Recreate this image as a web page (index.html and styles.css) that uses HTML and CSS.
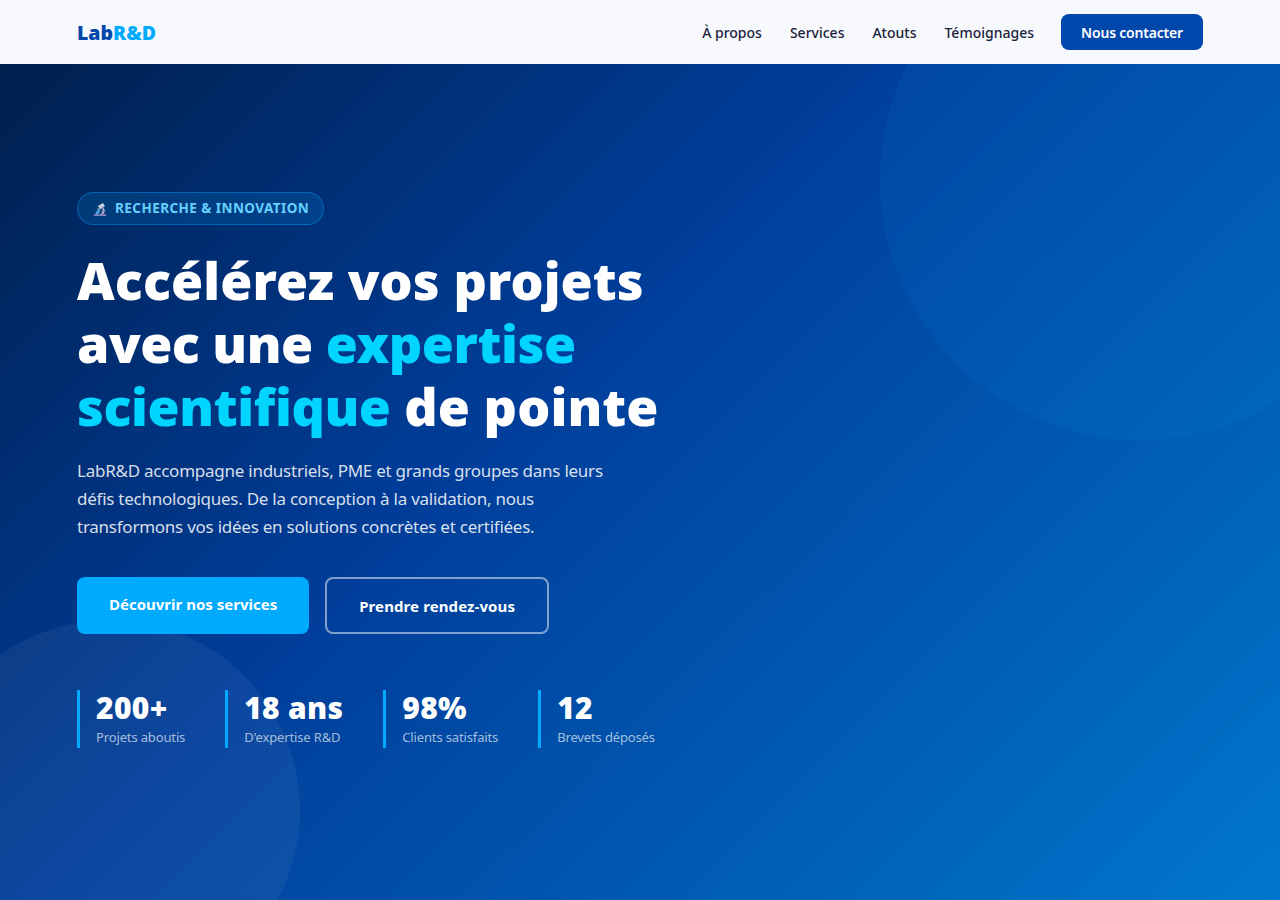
FILE: index.html
```html
<!DOCTYPE html>
<html lang="fr">
<head>
<meta charset="utf-8">
<title>LabR&amp;D</title>
<link rel="stylesheet" href="styles.css">
</head>
<body>
<nav class="navbar">
  <a class="logo" href="#">Lab<span class="logo-accent">R&amp;D</span></a>
  <div class="nav-links">
    <a class="nav-link" href="#">À propos</a>
    <a class="nav-link" href="#">Services</a>
    <a class="nav-link" href="#">Atouts</a>
    <a class="nav-link" href="#">Témoignages</a>
    <a class="nav-cta" href="#">Nous contacter</a>
  </div>
</nav>
<section class="hero">
  <div class="circle circle-top"></div>
  <div class="circle circle-bottom"></div>
  <div class="hero-content">
    <div class="badge">
      <svg class="badge-icon" viewBox="0 0 14 14" aria-hidden="true">
        <path d="M.8 12.400h12.400V14H.8z" fill="#8d86b8"/>
        <path d="M2.500 12.400c0-2.200 1-3.800 3-4.400l2 1.500c-1 .4-1.800 1.300-2 2.900z" fill="#4da3e6"/>
        <path d="M4.800 4 10 1l2 3-4.600 3.200z" fill="#c9cbdb"/>
        <path d="M9.800 5c2.400 1.500 2.800 5.400.4 7.400H6.600c2-.8 3.400-2.600 2.600-5.600z" fill="#a8a4cc"/>
        <path d="M4 6.600h2.600l1 2H4.800z" fill="#86a9dc"/>
      </svg>
      <span class="badge-text">RECHERCHE &amp; INNOVATION</span>
    </div>
    <h1 class="title">Accélérez vos projets<br><span class="title-tight">avec une </span><span class="title-accent">expertise<br>scientifique</span> de pointe</h1>
    <p class="lead">LabR&amp;D accompagne industriels, PME et grands groupes dans leurs<br>défis technologiques. De la conception à la validation, nous<br>transformons vos idées en solutions concrètes et certifiées.</p>
    <div class="actions">
      <a class="btn btn-primary" href="#">Découvrir nos services</a>
      <a class="btn btn-outline" href="#">Prendre rendez-vous</a>
    </div>
    <div class="stats">
      <div class="stat"><div class="stat-num">200+</div><div class="stat-label">Projets aboutis</div></div>
      <div class="stat"><div class="stat-num">18 ans</div><div class="stat-label">D'expertise R&amp;D</div></div>
      <div class="stat"><div class="stat-num">98%</div><div class="stat-label">Clients satisfaits</div></div>
      <div class="stat"><div class="stat-num">12</div><div class="stat-label">Brevets déposés</div></div>
    </div>
  </div>
</section>
</body>
</html>
```
FILE: styles.css
```css
* { box-sizing: border-box; margin: 0; padding: 0; }
html, body { height: 100%; }
body { font-family: "Noto Sans", "Open Sans", sans-serif; background: #f8f9fc; overflow: hidden; }
a { text-decoration: none; }

.navbar { height: 64px; padding: 0 77px; background: #f8f9fc; display: flex; align-items: center; justify-content: space-between; }
.logo { font-size: 19.500px; font-weight: 900; color: #0047ab; }
.logo-accent { color: #00aaff; }
.nav-links { display: flex; align-items: center; gap: 28px; }
.nav-link { font-size: 14px; font-weight: 500; color: #1a2340; }
.nav-cta { height: 36px; width: 142px; margin-left: -1px; display: flex; align-items: center; justify-content: center; background: #0047ab; color: #fff; border-radius: 8px; font-size: 14px; font-weight: 600; letter-spacing: -0.2px; }

.hero { position: relative; height: 836px; padding: 128px 77px 0; overflow: hidden; background: linear-gradient(135deg, #001f4d 0%, #003d99 40%, #0077cc 100%); }
.circle { position: absolute; border-radius: 50%; }
.circle-top { width: 520px; height: 520px; top: -144px; right: -120px; background: rgba(0,170,255,.08); }
.circle-bottom { width: 380px; height: 380px; bottom: -100px; left: -80px; background: rgba(255,255,255,.05); }
.hero-content { position: relative; }

.badge { display: inline-flex; align-items: center; gap: 8px; height: 33px; padding: 0 14px 0 15px; border: 1px solid rgba(0,170,255,.4); border-radius: 999px; background: rgba(0,170,255,.15); color: #66d0ff; font-size: 13.500px; font-weight: 700; letter-spacing: 0.44px; }
.badge-text { margin-bottom: 2px; }
.badge-icon { width: 14px; height: 14px; flex: none; }

.title { margin-top: 23px; font-size: 52px; line-height: 63px; font-weight: 900; letter-spacing: 0.1px; color: #fff; }
.title-tight { letter-spacing: -0.5px; }
.title-accent { letter-spacing: -0.4px; color: #00d4ff; }

.lead { margin-top: 20px; font-size: 17px; line-height: 28px; letter-spacing: -0.25px; color: rgba(255,255,255,.85); }

.actions { display: flex; align-items: stretch; gap: 16px; margin-top: 36px; }
.btn { display: block; padding: 17px 32px 15px; border-radius: 8px; color: #fff; font-size: 15px; line-height: 21px; font-weight: 700; }
.btn-primary { background: #00aaff; }
.btn-outline { border: 2px solid rgba(255,255,255,.5); letter-spacing: 0.1px; }

.stats { display: flex; gap: 40px; margin-top: 56px; }
.stat { height: 58px; padding-left: 16px; border-left: 3px solid #00aaff; }
.stat-num { font-size: 30px; line-height: 36px; font-weight: 900; letter-spacing: 0.3px; color: #fff; }
.stat-label { font-size: 13px; line-height: 22px; letter-spacing: -0.14px; color: rgba(255,255,255,.65); }
```
